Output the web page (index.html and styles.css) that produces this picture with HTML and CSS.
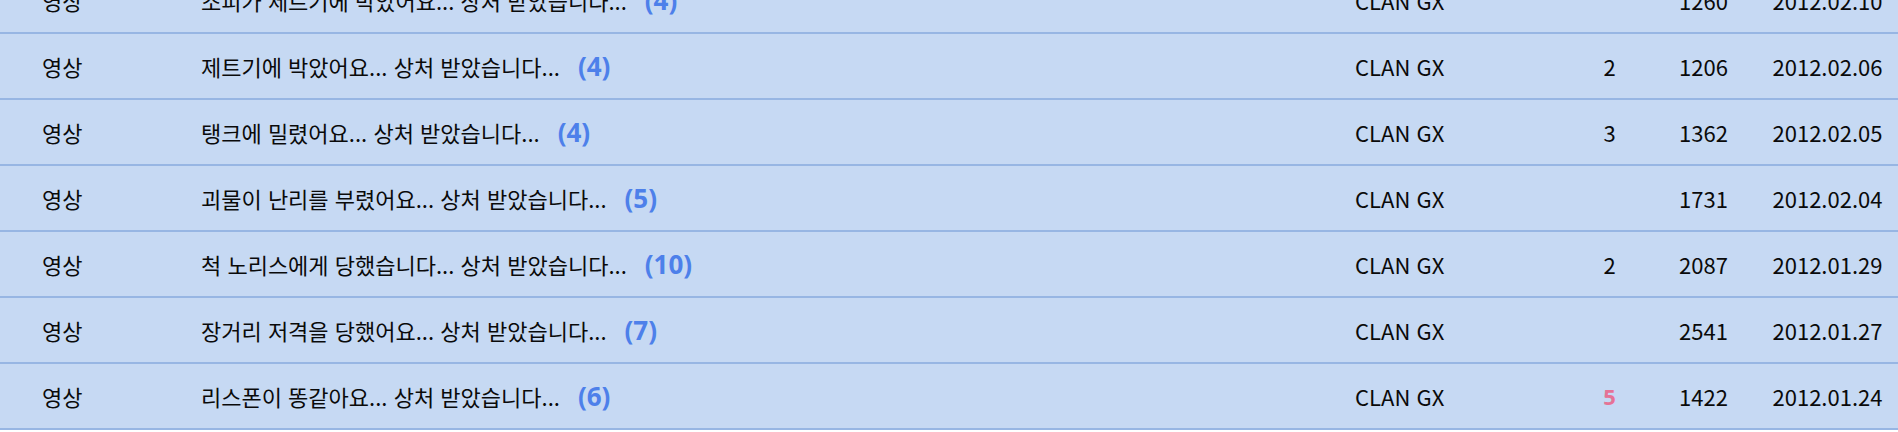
FILE: index.html
```html
<!DOCTYPE html>
<html lang="ko">
<head>
<meta charset="utf-8">
<link rel="stylesheet" href="styles.css">
</head>
<body>
<div class="list">
  <div class="row"><span class="type">영상</span><span class="title">조피가 제트기에 박았어요... 상처 받았습니다...<span class="cnt">(4)</span></span><span class="writer">CLAN GX</span><span class="num"></span><span class="num">1260</span><span class="date">2012.02.10</span></div>
  <div class="row"><span class="type">영상</span><span class="title">제트기에 박았어요... 상처 받았습니다...<span class="cnt">(4)</span></span><span class="writer">CLAN GX</span><span class="num">2</span><span class="num">1206</span><span class="date">2012.02.06</span></div>
  <div class="row"><span class="type">영상</span><span class="title">탱크에 밀렸어요... 상처 받았습니다...<span class="cnt">(4)</span></span><span class="writer">CLAN GX</span><span class="num">3</span><span class="num">1362</span><span class="date">2012.02.05</span></div>
  <div class="row"><span class="type">영상</span><span class="title">괴물이 난리를 부렸어요... 상처 받았습니다...<span class="cnt">(5)</span></span><span class="writer">CLAN GX</span><span class="num"></span><span class="num">1731</span><span class="date">2012.02.04</span></div>
  <div class="row"><span class="type">영상</span><span class="title">척 노리스에게 당했습니다... 상처 받았습니다...<span class="cnt">(10)</span></span><span class="writer">CLAN GX</span><span class="num">2</span><span class="num">2087</span><span class="date">2012.01.29</span></div>
  <div class="row"><span class="type">영상</span><span class="title">장거리 저격을 당했어요... 상처 받았습니다...<span class="cnt">(7)</span></span><span class="writer">CLAN GX</span><span class="num"></span><span class="num">2541</span><span class="date">2012.01.27</span></div>
  <div class="row"><span class="type">영상</span><span class="title">리스폰이 똥같아요... 상처 받았습니다...<span class="cnt">(6)</span></span><span class="writer">CLAN GX</span><span class="num hot">5</span><span class="num">1422</span><span class="date">2012.01.24</span></div>
</div>
</body>
</html>
```
FILE: styles.css
```css
html, body {
  margin: 0;
  padding: 0;
  background: #ffffff;
  overflow: hidden;
}
.list {
  margin-top: -32px;
  font-family: "Noto Sans CJK KR", "Noto Sans", sans-serif;
  font-size: 22px;
  color: #0a0a0a;
}
.row {
  display: grid;
  grid-template-columns: 201px 1154px 214px 81px 107px 141px;
  align-items: center;
  height: 64px;
  background: #c6d9f3;
  border-bottom: 2px solid #97b6e3;
  white-space: nowrap;
}
.type {
  padding-left: 42px;
}
.cnt {
  margin-left: 18px;
  color: #4d80ea;
  font-family: "Open Sans", "Noto Sans", sans-serif;
  font-size: 26px;
  font-weight: 700;
}
.num, .date {
  text-align: center;
}
.hot {
  color: #e57396;
  font-family: "Open Sans", "Noto Sans", sans-serif;
  font-weight: 700;
}
```
